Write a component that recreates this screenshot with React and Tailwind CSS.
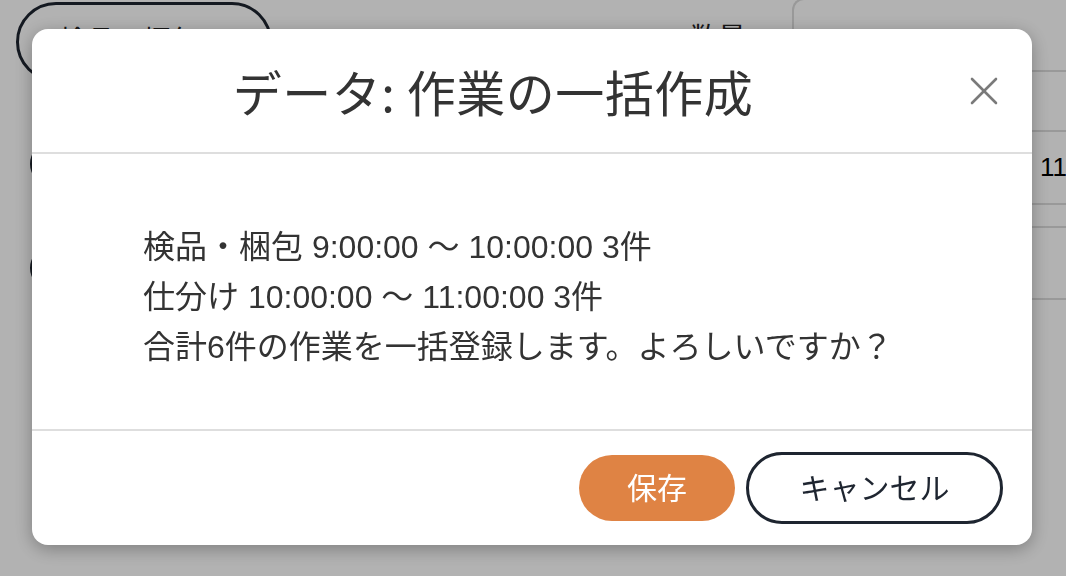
import { X } from "lucide-react";

const jp = { fontFamily: '"Liberation Sans", "Noto Sans CJK JP", sans-serif' };

const lines = [
  "検品・梱包 9:00:00 〜 10:00:00 3件",
  "仕分け 10:00:00 〜 11:00:00 3件",
  "合計6件の作業を一括登録します。よろしいですか？",
];

const rows = [
  { h: "h-[72px]", v: "" },
  { h: "h-[60px]", v: "" },
  { h: "h-[73px]", v: "11" },
  { h: "h-[23px]", v: "" },
  { h: "h-[72px]", v: "" },
];

const Page = () => (
  <div className="h-[576px] bg-white overflow-hidden" style={jp}>
    <div className="flex">
      <div className="w-[272px] pl-4 pt-[2px] flex flex-col gap-[60px]">
        <div className="h-[80px] rounded-[44px] border-[3px] border-[#1e2530] px-10 pt-4 text-[28px] text-[#222]">
          検品・梱包
        </div>
        <div className="ml-[14px] h-[44px] rounded-full border-[3px] border-[#1e2530]" />
        <div className="ml-[14px] h-[44px] rounded-full border-[3px] border-[#1e2530]" />
      </div>
      <div className="w-[520px] pt-[18px] pl-[418px] text-[28px] text-[#222]">数量</div>
      <div className="flex-1 border-l-2 border-t-2 border-[#dcdcdc] rounded-tl-xl -mt-[2px]">
        {rows.map((r, i) => (
          <div
            key={i}
            className={`${r.h} border-b-2 border-[#dcdcdc] flex items-center justify-end text-[26px] text-black`}
          >
            <span className="w-[26px] overflow-hidden whitespace-nowrap">{r.v}</span>
          </div>
        ))}
      </div>
    </div>
  </div>
);

const ConfirmModal = () => (
  <div className="fixed inset-0 bg-black/30 flex items-center justify-center">
    <div className="w-[1000px] bg-white rounded-2xl shadow-[0_4px_18px_rgba(0,0,0,0.3)] -mt-[2px] -ml-[2px]">
      <div className="h-[123px] flex items-center">
        <h2
          className="flex-1 text-center text-[49px] text-[#333] tracking-[0.5px] pl-[2px]"
          style={{ fontFamily: '"Noto Sans CJK JP", sans-serif' }}
        >
          データ: 作業の一括作成
        </h2>
        <button className="w-16 mr-4 flex items-center justify-center text-[#7a7a7a]">
          <X size={48} strokeWidth={1.3} />
        </button>
      </div>
      <div className="h-[2px] bg-[#dedede]" />
      <div className="pt-[68px] pb-[57px] pl-[111px] text-[32px] leading-[50px] text-[#333]" style={jp}>
        {lines.map((t) => (
          <p key={t}>{t}</p>
        ))}
      </div>
      <div className="h-[2px] bg-[#dedede]" />
      <div className="h-[114px] flex items-center justify-end gap-[11px] pr-[29px]" style={jp}>
        <button className="w-[156px] h-[66px] rounded-full bg-[#df8344] text-white text-[30px]">
          保存
        </button>
        <button className="w-[257px] h-[72px] rounded-full border-[3px] border-[#1e2530] text-[#1e2530] text-[30px]">
          キャンセル
        </button>
      </div>
    </div>
  </div>
);

export default function App() {
  return (
    <div>
      <Page />
      <ConfirmModal />
    </div>
  );
}
